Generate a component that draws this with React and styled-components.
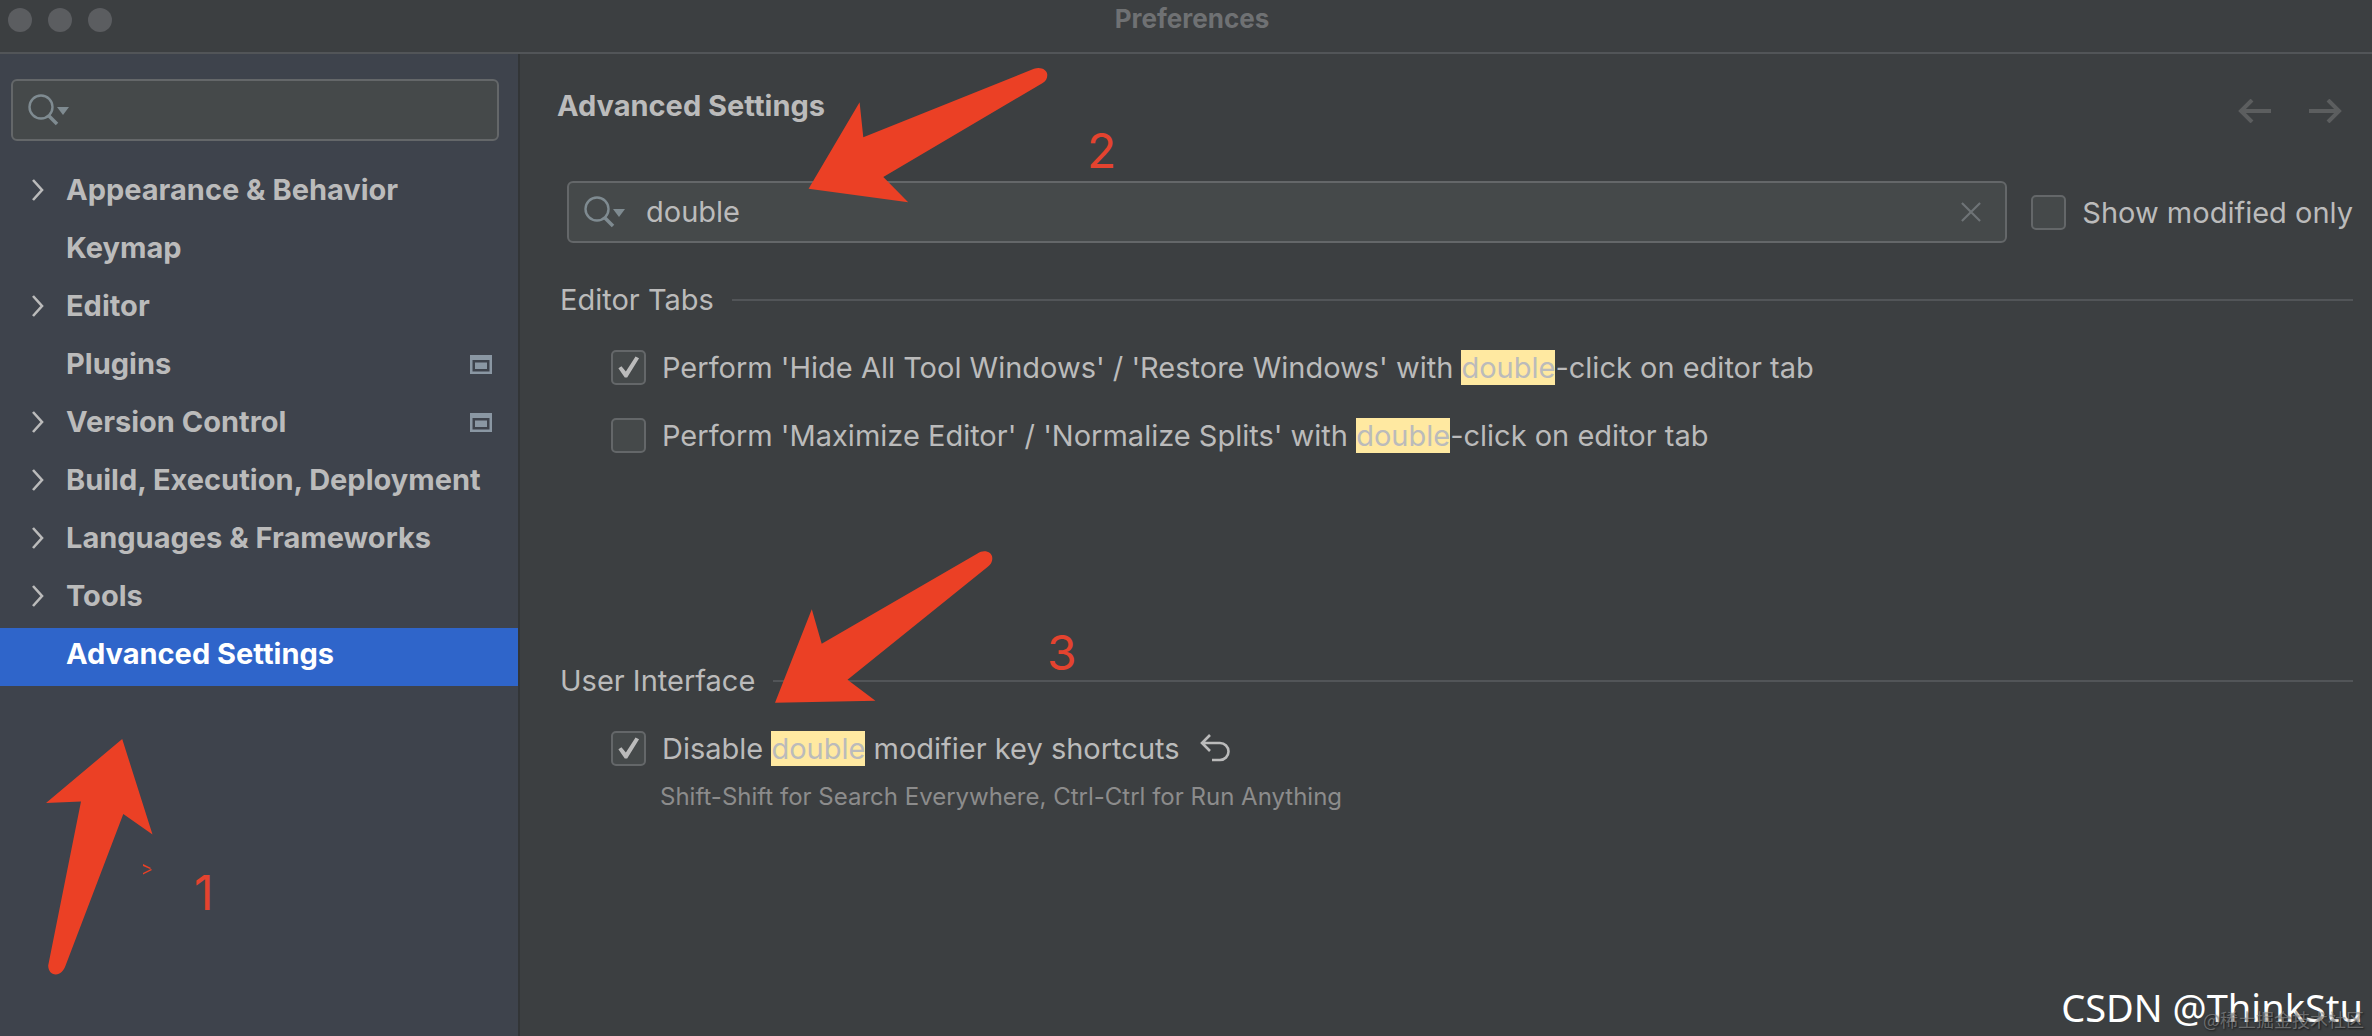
import styled, { createGlobalStyle } from 'styled-components';

const colors = {
	panel: '#3c3f41',
	sidebar: '#3e434c',
	field: '#45494a',
	border: '#646769',
	line: '#525558',
	text: '#bbbbbb',
	muted: '#8c8c8c',
	icon: '#7f8b91',
	selected: '#2f65ca',
	mark: '#ffe9a1',
	red: '#eb4025',
};

const GlobalStyle = createGlobalStyle`
	* {
		box-sizing: border-box;
	}
	body {
		margin: 0;
		background: ${colors.panel};
		color: ${colors.text};
		font-family: Inter, "Liberation Sans", sans-serif;
		font-size: 29px;
		line-height: 34px;
	}
	button, input {
		font: inherit;
		color: inherit;
	}
`;

const Window = styled.div`
	position: relative;
	display: flex;
	flex-direction: column;
	min-height: 100vh;
	overflow: hidden;
`;
const TitleBar = styled.header`
	display: grid;
	grid-template-columns: 1fr auto 1fr;
	align-items: start;
	height: 54px;
	padding: 2px 8px 0;
	border-bottom: 2px solid ${colors.line};
	h1 {
		margin: 0;
		padding-left: 12px;
		font-size: 26px;
		font-weight: 700;
		color: #6f7173;
	}
`;
const Lights = styled.div`
	display: flex;
	gap: 16px;
	padding-top: 6px;
	button {
		width: 24px;
		height: 24px;
		padding: 0;
		border: 0;
		border-radius: 50%;
		background: #5b5d60;
	}
`;
const Body = styled.div`
	flex: 1;
	display: flex;
`;
const Sidebar = styled.aside`
	flex: none;
	width: 520px;
	padding-top: 25px;
	background: ${colors.sidebar};
	border-right: 2px solid #323537;
`;
const SearchField = styled.div`
	flex: 1;
	min-width: 0;
	display: flex;
	align-items: center;
	height: 62px;
	padding: 0 24px 0 15px;
	background: ${colors.field};
	border: 2px solid ${colors.border};
	border-radius: 6px;
	svg {
		flex: none;
	}
	input {
		flex: 1;
		min-width: 0;
		padding: 0;
		margin-left: 20px;
		background: none;
		border: 0;
		outline: 0;
	}
`;
const SidebarSearch = styled.div`
	display: flex;
	padding: 0 19px 0 11px;
	margin-bottom: 23px;
`;
const Tree = styled.nav`
	display: flex;
	flex-direction: column;
`;
const TreeItem = styled.a`
	display: flex;
	align-items: center;
	height: 58px;
	padding: 0 26px 6px 30px;
	font-weight: 700;
	text-decoration: none;
	white-space: nowrap;
	color: ${props => props.$selected ? '#ffffff' : colors.text};
	background: ${props => props.$selected ? colors.selected : 'transparent'};
	.arrow {
		flex: none;
		display: flex;
		width: 36px;
	}
	.label {
		flex: 1;
	}
`;
const Main = styled.main`
	flex: 1;
	min-width: 0;
	padding: 35px 19px 0 37px;
`;
const Heading = styled.div`
	display: flex;
	justify-content: space-between;
	align-items: center;
	margin-bottom: 58px;
	h2 {
		margin: 0;
		font-size: 29px;
		font-weight: 700;
	}
`;
const IconButton = styled.button`
	display: flex;
	padding: 0;
	background: none;
	border: 0;
`;
const History = styled.div`
	display: flex;
	gap: 36px;
	padding: 8px 11px 0 0;
	margin-bottom: -2px;
`;
const Filter = styled.div`
	display: flex;
	align-items: center;
	gap: 24px;
	padding-left: 10px;
`;
const CheckLabel = styled.label`
	display: flex;
	align-items: center;
	gap: 16px;
	white-space: nowrap;
	span {
		padding-top: 2px;
	}
`;
const Checkbox = styled.input`
	flex: none;
	appearance: none;
	display: grid;
	place-items: center;
	width: 35px;
	height: 35px;
	margin: 0;
	background: ${colors.field};
	border: 2px solid ${colors.border};
	border-radius: 5px;
	&:checked::after {
		content: '';
		width: 22px;
		height: 22px;
		background: ${colors.text};
		clip-path: polygon(4% 56%, 18% 47%, 38% 70%, 82% 2%, 98% 10%, 44% 98%, 33% 98%);
	}
`;
const Section = styled.section`
	padding: 40px 0 0 3px;
`;
const Legend = styled.div`
	display: flex;
	align-items: center;
	gap: 18px;
	margin-bottom: 32px;
	h3 {
		margin: 0;
		font-size: 29px;
		font-weight: 400;
	}
	&::after {
		content: '';
		flex: 1;
		height: 2px;
		background: ${colors.line};
	}
`;
const Options = styled.div`
	display: flex;
	flex-direction: column;
	gap: 32px;
	min-height: ${props => props.$tall ? '275px' : '0'};
	padding-left: 51px;
`;
const Option = styled.div`
	display: flex;
	align-items: center;
	gap: 20px;
	mark {
		color: inherit;
		background: ${colors.mark};
	}
`;
const Hint = styled.p`
	margin: 16px 0 0;
	padding-left: 100px;
	font-size: 24px;
	line-height: 30px;
	color: ${colors.muted};
`;
// red marks lie over the window
const Pointer = styled.svg`
	position: absolute;
	left: ${props => props.$x}px;
	top: ${props => props.$y}px;
	fill: ${colors.red};
	pointer-events: none;
`;
const Step = styled.span`
	position: absolute;
	left: ${props => props.$x}px;
	top: ${props => props.$y}px;
	font-size: 48px;
	line-height: 58px;
	font-weight: 400;
	color: #e4432f;
`;
const Watermark = styled.div`
	position: absolute;
	right: 9px;
	bottom: 2px;
	font-family: "Noto Sans", sans-serif;
	font-size: 38px;
	line-height: 54px;
	color: #ffffff;
`;
const SiteMark = styled.div`
	position: absolute;
	right: 8px;
	bottom: 4px;
	font-family: "Noto Sans CJK SC", sans-serif;
	font-size: 18px;
	line-height: 26px;
	color: rgba(150, 150, 150, 0.6);
	text-shadow: 1px 1px 2px rgba(0, 0, 0, 0.6);
`;

const SearchIcon = () => (
	<svg width="42" height="32" viewBox="0 0 42 32" fill="none" aria-hidden="true">
		<circle cx="13" cy="13" r="11.5" stroke={colors.icon} strokeWidth="2.4" />
		<path d="M21 22l8 8" stroke={colors.icon} strokeWidth="3.6" />
		<path d="M29 13h12l-6 8z" fill={colors.icon} />
	</svg>
);

const Chevron = () => (
	<svg width="14" height="24" viewBox="0 0 14 24" fill="none" aria-hidden="true">
		<path d="M3 2l9 10-9 10" stroke={colors.text} strokeWidth="2.6" />
	</svg>
);

const ProjectIcon = () => (
	<svg width="22" height="19" viewBox="0 0 22 19" fill="#8a97a3" aria-hidden="true">
		<path fillRule="evenodd" d="M0 0h22v19H0zM2.5 5v11.5h17V5z" />
		<path d="M5 7.5h12v6.500H5z" />
	</svg>
);

const items = [
	{ name: 'Appearance & Behavior', open: true },
	{ name: 'Keymap' },
	{ name: 'Editor', open: true },
	{ name: 'Plugins', project: true },
	{ name: 'Version Control', open: true, project: true },
	{ name: 'Build, Execution, Deployment', open: true },
	{ name: 'Languages & Frameworks', open: true },
	{ name: 'Tools', open: true },
	{ name: 'Advanced Settings', selected: true },
];

const App = () => {
	return (
		<Window>
			<GlobalStyle />
			<TitleBar>
				<Lights>
					<button aria-label="Close" />
					<button aria-label="Minimize" />
					<button aria-label="Zoom" />
				</Lights>
				<h1>Preferences</h1>
			</TitleBar>
			<Body>
				<Sidebar>
					<SidebarSearch>
						<SearchField>
							<SearchIcon />
							<input type="text" aria-label="Search settings" />
						</SearchField>
					</SidebarSearch>
					<Tree>
						{items.map(item => (
							<TreeItem key={item.name} href="#" $selected={item.selected}>
								<span className='arrow'>{item.open && <Chevron />}</span>
								<span className='label'>{item.name}</span>
								{item.project && <ProjectIcon />}
							</TreeItem>
						))}
					</Tree>
				</Sidebar>
				<Main>
					<Heading>
						<h2>Advanced Settings</h2>
						<History>
							<IconButton aria-label="Back">
								<svg width="34" height="24" viewBox="0 0 34 24" fill="none" stroke="#5c5e5f" strokeWidth="4">
									<path d="M33 12H3M14 1L3 12l11 11" />
								</svg>
							</IconButton>
							<IconButton aria-label="Forward">
								<svg width="34" height="24" viewBox="0 0 34 24" fill="none" stroke="#5c5e5f" strokeWidth="4">
									<path d="M1 12h30M20 1l11 11-11 11" />
								</svg>
							</IconButton>
						</History>
					</Heading>
					<Filter>
						<SearchField>
							<SearchIcon />
							<input type="text" aria-label="Filter options" defaultValue="double" />
							<IconButton aria-label="Clear">
								<svg width="20" height="20" viewBox="0 0 22 22" fill="none" stroke="#6e7376" strokeWidth="2.4">
									<path d="M1 1l20 20M21 1L1 21" />
								</svg>
							</IconButton>
						</SearchField>
						<CheckLabel>
							<Checkbox type="checkbox" />
							<span>Show modified only</span>
						</CheckLabel>
					</Filter>
					<Section>
						<Legend>
							<h3>Editor Tabs</h3>
						</Legend>
						<Options $tall>
							<Option>
								<CheckLabel>
									<Checkbox type="checkbox" defaultChecked />
									<span>Perform 'Hide All Tool Windows' / 'Restore Windows' with <mark>double</mark>-click on editor tab</span>
								</CheckLabel>
							</Option>
							<Option>
								<CheckLabel>
									<Checkbox type="checkbox" />
									<span>Perform 'Maximize Editor' / 'Normalize Splits' with <mark>double</mark>-click on editor tab</span>
								</CheckLabel>
							</Option>
						</Options>
					</Section>
					<Section>
						<Legend>
							<h3>User Interface</h3>
						</Legend>
						<Options>
							<Option>
								<CheckLabel>
									<Checkbox type="checkbox" defaultChecked />
									<span>Disable <mark>double</mark> modifier key shortcuts</span>
								</CheckLabel>
								<IconButton aria-label="Reset">
									<svg width="30" height="28" viewBox="0 0 30 28" fill="none" stroke={colors.text} strokeWidth="2.6">
										<path d="M10 1L2 9l8 8M2 9h18a8.500 8.500 0 0 1 0 17h-8" />
									</svg>
								</IconButton>
							</Option>
						</Options>
						<Hint>Shift-Shift for Search Everywhere, Ctrl-Ctrl for Run Anything</Hint>
					</Section>
				</Main>
			</Body>

			<Pointer $x={46} $y={739} width="110" height="238" viewBox="46 739 110 238">
				<path d="M122.200 739L46 803l35-1.500L48.200 965.500c0 5 3 9 7.600 9 4.500 0 7.800-4 9.600-8.500L123.300 814l29.200 20.500z" />
			</Pointer>
			<Pointer $x={808} $y={67} width="242" height="138" viewBox="808 67 242 138">
				<path d="M808.600 188.700l51-86.400 3.700 35L1034 68.800c6-2.500 13.300.5 13.300 6 0 4-1.600 6.600-4.600 8.200L883.300 177l24.900 25.300z" />
			</Pointer>
			<Pointer $x={775} $y={550} width="220" height="154" viewBox="775 550 220 154">
				<path d="M775 702.700l36.800-93.400 9.900 34.400L977.500 553.500c6.500-4.500 14.800-1.500 14.800 4.500 0 4-1.300 6-4.800 9L847.500 679.700l27.900 21z" />
			</Pointer>
			<Pointer $x={143} $y={863} width="10" height="12" viewBox="0 0 10 12">
				<path d="M0 1l8 4-1 1-7-3zM0 10l8-4 1 1-9 4.500z" />
			</Pointer>
			<Step $x={194} $y={864}>1</Step>
			<Step $x={1087} $y={122}>2</Step>
			<Step $x={1047} $y={624}>3</Step>
			<Watermark>CSDN @ThinkStu</Watermark>
			<SiteMark>@稀土掘金技术社区</SiteMark>
		</Window>
	);
};

export default App;
